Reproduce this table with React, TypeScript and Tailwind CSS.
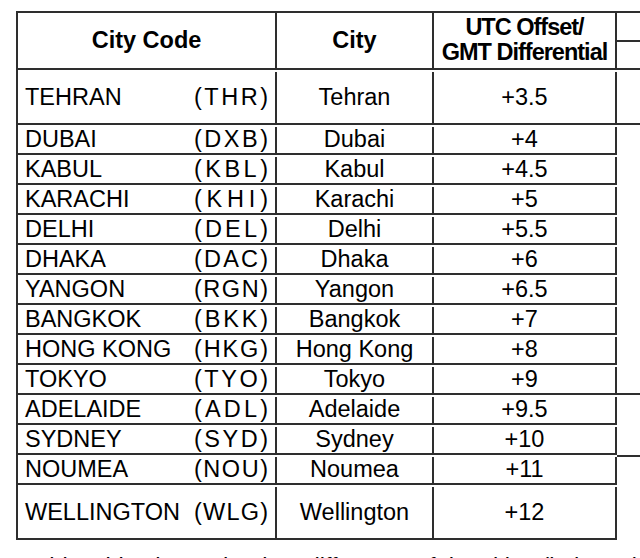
import React from "react";

type Row = { name: string; code: string; city: string; offset: string; tall?: boolean };

const rows: Row[] = [
  { name: "TEHRAN", code: "THR", city: "Tehran", offset: "+3.5", tall: true },
  { name: "DUBAI", code: "DXB", city: "Dubai", offset: "+4" },
  { name: "KABUL", code: "KBL", city: "Kabul", offset: "+4.5" },
  { name: "KARACHI", code: "KHI", city: "Karachi", offset: "+5" },
  { name: "DELHI", code: "DEL", city: "Delhi", offset: "+5.5" },
  { name: "DHAKA", code: "DAC", city: "Dhaka", offset: "+6" },
  { name: "YANGON", code: "RGN", city: "Yangon", offset: "+6.5" },
  { name: "BANGKOK", code: "BKK", city: "Bangkok", offset: "+7" },
  { name: "HONG KONG", code: "HKG", city: "Hong Kong", offset: "+8" },
  { name: "TOKYO", code: "TYO", city: "Tokyo", offset: "+9" },
  { name: "ADELAIDE", code: "ADL", city: "Adelaide", offset: "+9.5" },
  { name: "SYDNEY", code: "SYD", city: "Sydney", offset: "+10" },
  { name: "NOUMEA", code: "NOU", city: "Noumea", offset: "+11" },
  { name: "WELLINGTON", code: "WLG", city: "Wellington", offset: "+12", tall: true },
];

const Code = ({ code }: { code: string }) => {
  const chars = ["(", ...code.split(""), ")"];
  return (
    <span className="flex w-[74px] justify-between">
      {chars.map((c, i) => (
        <span key={i}>{c}</span>
      ))}
    </span>
  );
};

export default function App() {
  return (
    <div className="w-[640px] h-[558px] overflow-hidden bg-white text-black font-['Liberation_Sans',Arial,sans-serif] text-[23.5px] leading-none">
      <div className="flex pt-[11px] pl-4">
        {/* main table */}
        <div className="shrink-0 border-l-2 border-t-2 border-[#2e2e2e]">
          <div className="grid grid-cols-[259px_157px_183px] h-[57px] border-b-2 border-[#2e2e2e] font-bold">
            <div className="flex items-center justify-center border-r-2 border-[#2e2e2e] pt-[1px]">City Code</div>
            <div className="flex items-center justify-center border-r-2 border-[#2e2e2e] pt-[1px]">City</div>
            <div className="flex flex-col items-center justify-center border-r-2 border-[#2e2e2e] leading-[25px] tracking-[-1px] pb-[1px]">
              <span>UTC Offset/</span>
              <span>GMT Differential</span>
            </div>
          </div>
          {rows.map((r) => (
            <div
              key={r.code}
              className={`grid grid-cols-[259px_157px_183px] border-b-2 border-[#2e2e2e] pt-[2px] ${
                r.tall ? "h-[55px]" : "h-[30px]"
              }`}
            >
              <div className="flex items-center justify-between px-[7px] border-r-2 border-[#2e2e2e]">
                <span>{r.name}</span>
                <Code code={r.code} />
              </div>
              <div className="flex items-center justify-center border-r-2 border-[#2e2e2e]">{r.city}</div>
              <div className="flex items-center justify-center border-r-2 border-[#2e2e2e]">{r.offset}</div>
            </div>
          ))}
        </div>
        {/* next table, cut off at the edge */}
        <div className="shrink-0 w-[60px] flex flex-col border-t-2 border-[#2e2e2e]">
          <div className="h-[29px] border-b-2 border-[#2e2e2e]" />
          <div className="h-[28px] border-b-2 border-[#2e2e2e]" />
          <div className="h-[55px] border-b-2 border-[#2e2e2e]" />
          <div className="h-[270px] border-b-2 border-[#2e2e2e]" />
          <div className="h-[62px] border-b-2 border-[#2e2e2e]" />
        </div>
      </div>
      <p className="mt-[16px] pl-[35px] whitespace-nowrap">
        This table shows the time difference of the cities (in hours)
      </p>
    </div>
  );
}
